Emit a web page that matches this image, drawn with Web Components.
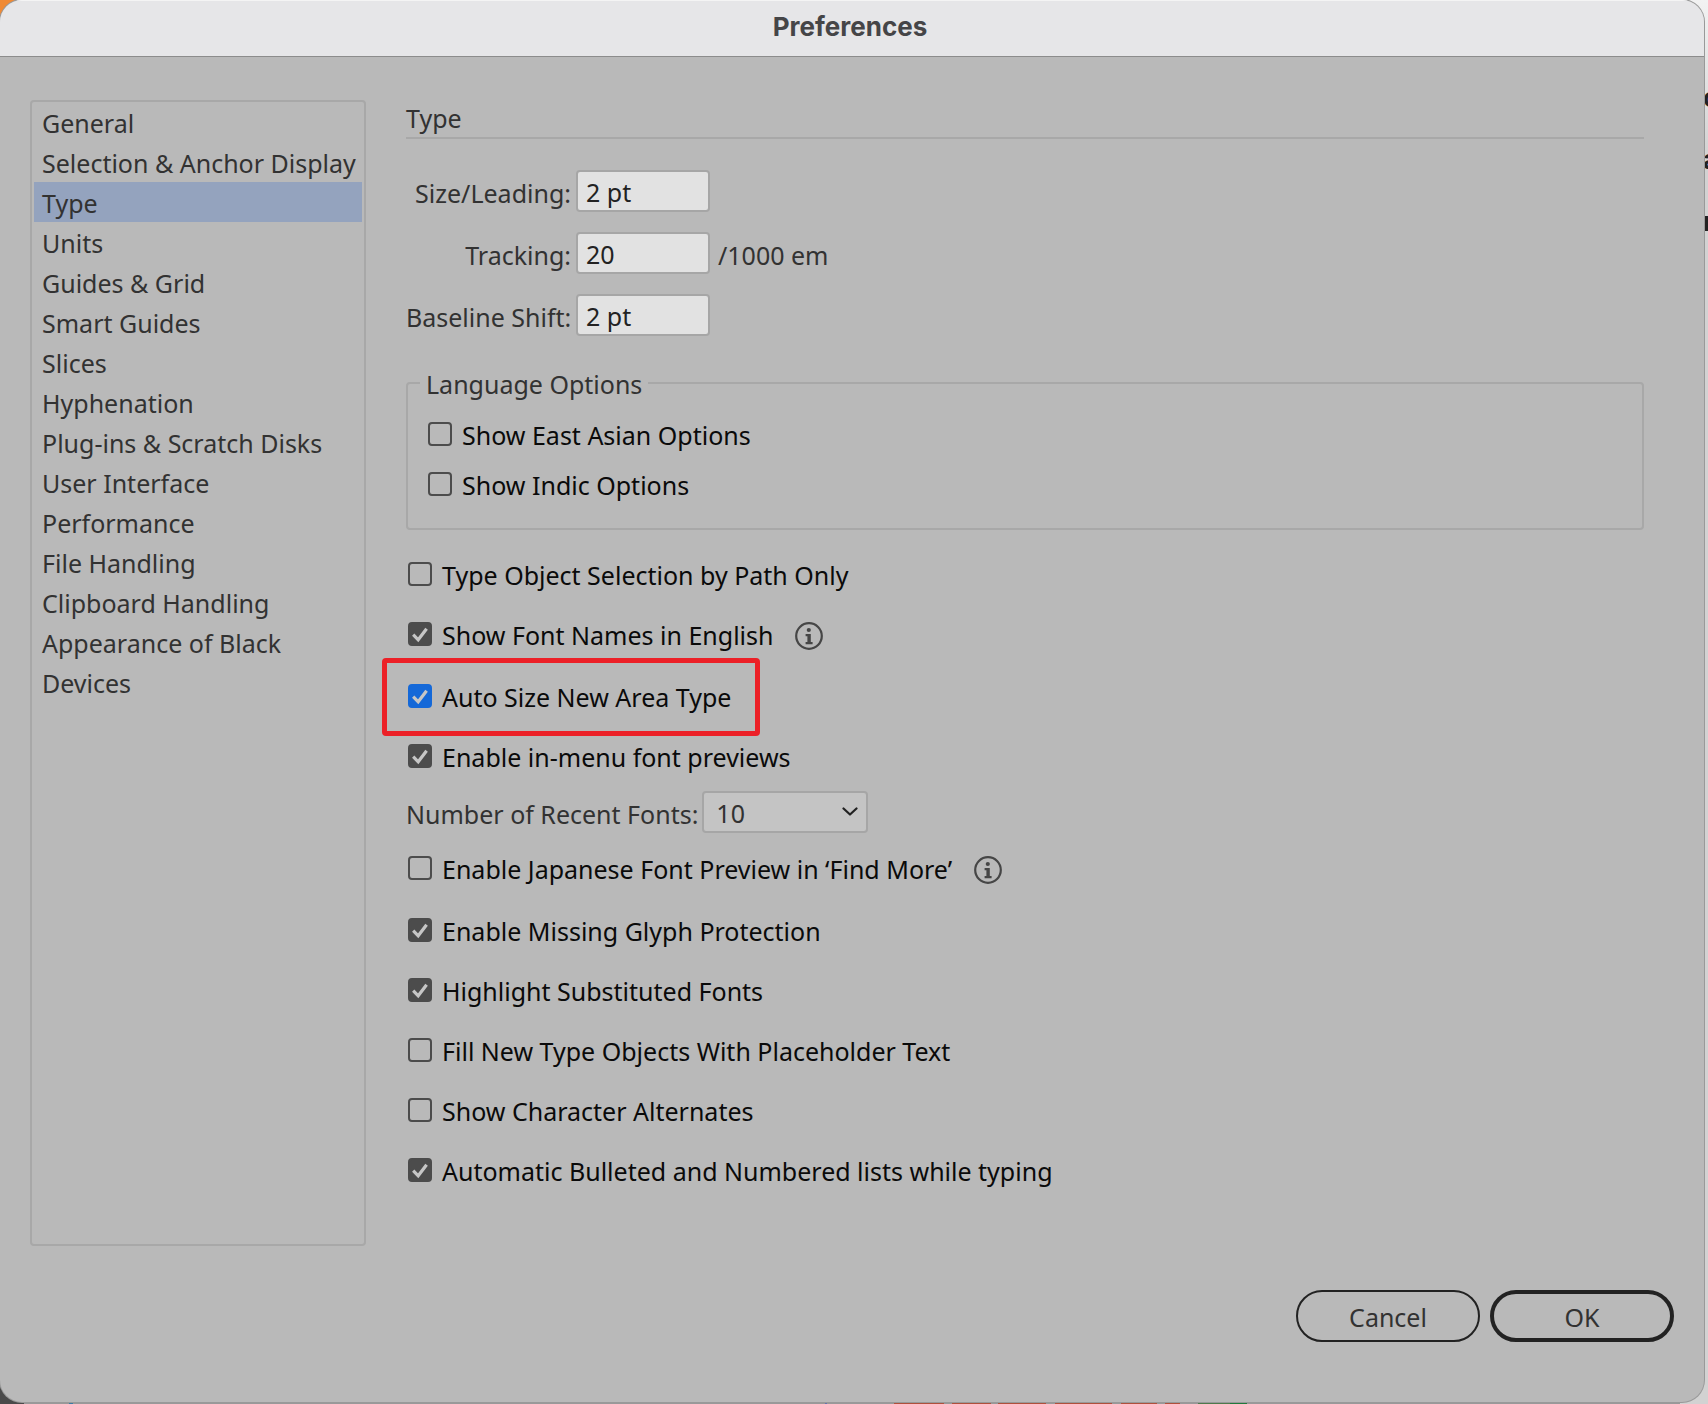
<!DOCTYPE html>
<html lang="en">
<head>
<meta charset="utf-8">
<title>Preferences</title>
<style>
html, body {
    margin: 0;
    min-height: 100%;
}
body {
    font-family: 'Noto Sans', 'Open Sans', sans-serif;
    font-size: 25px;
    line-height: 32px;
    color: #323232;
}
</style>
</head>
<body>
<desk-top>
    <span slot="behind">o</span>
    <span slot="behind">a</span>
    <span slot="behind">r</span>
    <pref-dialog heading="Preferences">
        <pref-nav slot="nav">
            <pref-nav-item>General</pref-nav-item>
            <pref-nav-item>Selection &amp; Anchor Display</pref-nav-item>
            <pref-nav-item selected>Type</pref-nav-item>
            <pref-nav-item>Units</pref-nav-item>
            <pref-nav-item>Guides &amp; Grid</pref-nav-item>
            <pref-nav-item>Smart Guides</pref-nav-item>
            <pref-nav-item>Slices</pref-nav-item>
            <pref-nav-item>Hyphenation</pref-nav-item>
            <pref-nav-item>Plug-ins &amp; Scratch Disks</pref-nav-item>
            <pref-nav-item>User Interface</pref-nav-item>
            <pref-nav-item>Performance</pref-nav-item>
            <pref-nav-item>File Handling</pref-nav-item>
            <pref-nav-item>Clipboard Handling</pref-nav-item>
            <pref-nav-item>Appearance of Black</pref-nav-item>
            <pref-nav-item>Devices</pref-nav-item>
        </pref-nav>
        <pref-panel heading="Type">
            <pref-field label="Size/Leading:" value="2 pt" slot="fields"></pref-field>
            <pref-field label="Tracking:" value="20" slot="fields">/1000 em</pref-field>
            <pref-field label="Baseline Shift:" value="2 pt" slot="fields"></pref-field>
            <pref-group legend="Language Options" slot="group">
                <pref-check>Show East Asian Options</pref-check>
                <pref-check>Show Indic Options</pref-check>
            </pref-group>
            <pref-check>Type Object Selection by Path Only</pref-check>
            <pref-check checked info>Show Font Names in English</pref-check>
            <pref-check checked marked>Auto Size New Area Type</pref-check>
            <pref-check checked>Enable in-menu font previews</pref-check>
            <pref-select label="Number of Recent Fonts:" value="10"></pref-select>
            <pref-check info>Enable Japanese Font Preview in ‘Find More’</pref-check>
            <pref-check checked>Enable Missing Glyph Protection</pref-check>
            <pref-check checked>Highlight Substituted Fonts</pref-check>
            <pref-check>Fill New Type Objects With Placeholder Text</pref-check>
            <pref-check>Show Character Alternates</pref-check>
            <pref-check checked>Automatic Bulleted and Numbered lists while typing</pref-check>
        </pref-panel>
        <pref-button slot="actions">Cancel</pref-button>
        <pref-button slot="actions" primary>OK</pref-button>
    </pref-dialog>
</desk-top>

<script>
class PrefElement extends HTMLElement {
    constructor() {
        super();
        this.attachShadow({mode: 'open'});
    }
    connectedCallback() {
        this.shadowRoot.innerHTML = `<style>*{box-sizing:border-box;}</style>` + this.render();
    }
}

// what can be seen around the window: page on the right, colour strips below
class DeskTop extends PrefElement {
    render() {
        return `
<style>
:host{
    display: grid;
    box-sizing: border-box;
    position: relative;
    overflow: hidden;
    min-height: 100vh;
    padding: 0 4px 2px 0;
    background:
        linear-gradient(#f08a35, #f08a35) 0 0 / 30px 30px no-repeat,
        linear-gradient(#4a4a4a, #4a4a4a) 0 100% / 24px 40px no-repeat,
        linear-gradient(90deg, transparent 69px, #3a7ca5 69px 73px, transparent 73px 825px, #6674b0 825px 827px, transparent 827px 894px,
            #b0503c 894px 944px, transparent 944px 952px, #b0503c 952px 991px, transparent 991px 998px, #b0503c 998px 1046px,
            transparent 1046px 1055px, #b0503c 1055px 1112px, transparent 1112px 1121px, #b0503c 1121px 1157px,
            transparent 1157px 1165px, #b0503c 1165px 1180px, transparent 1180px 1198px, #4f7a4c 1198px 1230px,
            #207a3c 1230px 1247px, transparent 1247px) 0 100% / 100% 2px no-repeat,
        linear-gradient(90deg, #999 0 1680px, transparent 1680px) 0 100% / 100% 2px no-repeat,
        linear-gradient(#f2f2f2, #d2d2d2 160px);
}
.behind{
    position: absolute;
    left: calc(100% - 5px);
    top: 67px;
    display: grid;
    font: bold 26px/62px Inter, sans-serif;
    color: #222;
}
::slotted(pref-dialog){
    position: relative;
}
</style>
<div class="behind" aria-hidden="true"><slot name="behind"></slot></div>
<slot></slot>`;
    }
}

class PrefDialog extends PrefElement {
    render() {
        return `
<style>
:host{
    display: flex;
    flex-direction: column;
    overflow: hidden;
    border-radius: 22px;
    background: #b9b9b9;
    box-shadow: 0 0 0 1px #999;
}
header{
    display: flex;
    justify-content: center;
    align-items: center;
    height: 57px;
    padding: 0 4px 4px 0;
    background: #e6e6e8;
    border-top: 1px solid #f4f4f4;
    border-bottom: 1px solid #8c8c8c;
}
h1{
    margin: 0;
    font: bold 26px/32px Inter, sans-serif;
    color: #454547;
}
.body{
    flex: 1;
    display: flex;
    align-items: stretch;
    gap: 40px;
    padding: 43px 60px 0 30px;
}
footer{
    display: flex;
    justify-content: flex-end;
    gap: 10px;
    padding: 44px 30px 60px;
}
</style>
<header><h1>${this.getAttribute('heading')}</h1></header>
<div class="body"><slot name="nav"></slot><slot></slot></div>
<footer><slot name="actions"></slot></footer>`;
    }
}

class PrefNav extends PrefElement {
    render() {
        return `
<style>
:host{
    flex: none;
    display: block;
    box-sizing: border-box;
    width: 336px;
    border: 2px solid #a8a8a8;
    border-radius: 4px;
}
nav{
    padding: 0 2px;
}
</style>
<nav aria-label="Categories"><slot></slot></nav>`;
    }
}

class PrefNavItem extends PrefElement {
    render() {
        return `
<style>
:host{
    display: block;
}
button{
    display: block;
    width: 100%;
    height: 40px;
    padding: 2px 0 0 8px;
    border: 0;
    background: none;
    font: inherit;
    color: inherit;
    text-align: left;
    white-space: nowrap;
}
:host([selected]) button{
    background: #94a3be;
}
</style>
<button type="button"><slot></slot></button>`;
    }
}

class PrefPanel extends PrefElement {
    render() {
        return `
<style>
:host{
    flex: 1;
    min-width: 0;
    display: block;
}
h2{
    margin: 0;
    padding: 2px 0 3px;
    border-bottom: 2px solid #a8a8a8;
    font: inherit;
}
.fields{
    display: grid;
    gap: 20px;
    padding: 31px 0 30px;
}
.options{
    display: grid;
    justify-items: start;
    padding: 14px 0 0 2px;
}
</style>
<h2>${this.getAttribute('heading')}</h2>
<div class="fields"><slot name="fields"></slot></div>
<slot name="group"></slot>
<div class="options"><slot></slot></div>`;
    }
}

class PrefField extends PrefElement {
    render() {
        return `
<style>
:host{
    display: flex;
    align-items: center;
}
label{
    width: 165px;
    margin-right: 5px;
    padding-top: 4px;
    text-align: right;
    white-space: nowrap;
}
input{
    width: 134px;
    height: 42px;
    margin-right: 8px;
    padding: 2px 0 0 8px;
    border: 2px solid #a6a6a6;
    border-radius: 4px;
    background: #e2e2e2;
    font: inherit;
    color: #222;
}
.unit{
    padding-top: 4px;
}
</style>
<label for="field">${this.getAttribute('label')}</label>
<input id="field" type="text" value="${this.getAttribute('value')}">
<span class="unit"><slot></slot></span>`;
    }
}

class PrefGroup extends PrefElement {
    render() {
        return `
<style>
:host{
    display: block;
    --row: 50px;
}
fieldset{
    display: grid;
    justify-items: start;
    margin: 0;
    padding: 9px 20px 19px;
    border: 2px solid #a8a8a8;
    border-radius: 4px;
}
legend{
    margin-left: -8px;
    padding: 2px 6px 0;
}
</style>
<fieldset>
    <legend>${this.getAttribute('legend')}</legend>
    <slot></slot>
</fieldset>`;
    }
}

class PrefCheck extends PrefElement {
    render() {
        const info = `
<button type="button" aria-label="More information">
    <svg width="28" height="28" viewBox="0 0 28 28">
        <circle cx="14" cy="14" r="12.8" fill="none" stroke="#464646" stroke-width="2.2"/>
        <circle cx="13.8" cy="8" r="2.1" fill="#464646"/>
        <path d="M10.600 12h5.200v8h1.800v2.200h-7v-2.200h1.800v-5.800h-1.800z" fill="#464646"/>
    </svg>
</button>`;
        return `
<style>
:host{
    display: flex;
    align-items: center;
    height: var(--row, 60px);
    color: #0a0a0a;
}
:host([info]){
    margin-bottom: 2px;
}
label{
    position: relative;
    display: flex;
    align-items: center;
    gap: 10px;
    white-space: nowrap;
}
.box{
    display: grid;
}
.box > *{
    grid-area: 1 / 1;
}
input{
    appearance: none;
    width: 24px;
    height: 24px;
    margin: 0;
    border: 2px solid #4c4c4c;
    border-radius: 4px;
}
input:checked{
    background: #4c4c4c;
}
:host([marked]) input{
    border-color: #1468d8;
    background: #1468d8;
}
.box svg{
    pointer-events: none;
    visibility: hidden;
}
input:checked + svg{
    visibility: visible;
}
.text{
    padding-top: 2px;
}
:host([marked]) label::after{
    content: '';
    position: absolute;
    inset: -21px -29px -23px -26px;
    border: 5px solid #ec2027;
    border-radius: 4px;
    pointer-events: none;
}
button{
    display: flex;
    margin: 4px 0 0 22px;
    padding: 0;
    border: 0;
    background: none;
}
</style>
<label>
    <span class="box">
        <input type="checkbox" ${this.hasAttribute('checked') ? 'checked' : ''}>
        <svg width="24" height="24" viewBox="0 0 24 24"><path d="M5.2 12.6l5 5.200L18.600 6.800" fill="none" stroke="#c6c6c6" stroke-width="3.200"/></svg>
    </span>
    <span class="text"><slot></slot></span>
</label>
${this.hasAttribute('info') ? info : ''}`;
    }
}

class PrefSelect extends PrefElement {
    render() {
        return `
<style>
:host{
    display: flex;
    align-items: center;
    gap: 4px;
    height: 52px;
    margin-left: -2px;
}
label{
    padding-top: 4px;
    white-space: nowrap;
}
.menu{
    display: grid;
    align-items: center;
}
.menu > *{
    grid-area: 1 / 1;
}
select{
    appearance: none;
    width: 166px;
    height: 42px;
    padding: 2px 40px 0 12px;
    border: 2px solid #a6a6a6;
    border-radius: 4px;
    background: #c4c4c4;
    font: inherit;
    color: inherit;
}
svg{
    justify-self: end;
    margin-right: 10px;
    pointer-events: none;
}
</style>
<label for="menu">${this.getAttribute('label')}</label>
<span class="menu">
    <select id="menu"><option>${this.getAttribute('value')}</option></select>
    <svg width="16" height="10" viewBox="0 0 16 10"><path d="M1.5 1.5L8 7.5l6.5-6" fill="none" stroke="#222" stroke-width="2.2" stroke-linecap="round" stroke-linejoin="round"/></svg>
</span>`;
    }
}

class PrefButton extends PrefElement {
    render() {
        return `
<style>
:host{
    display: block;
}
button{
    width: 184px;
    height: 52px;
    padding: 2px 0 0;
    border: 2px solid #222;
    border-radius: 26px;
    background: none;
    font: inherit;
    color: inherit;
}
:host([primary]) button{
    border-width: 4px;
}
</style>
<button type="button"><slot></slot></button>`;
    }
}

customElements.define('desk-top', DeskTop);
customElements.define('pref-dialog', PrefDialog);
customElements.define('pref-nav', PrefNav);
customElements.define('pref-nav-item', PrefNavItem);
customElements.define('pref-panel', PrefPanel);
customElements.define('pref-field', PrefField);
customElements.define('pref-group', PrefGroup);
customElements.define('pref-check', PrefCheck);
customElements.define('pref-select', PrefSelect);
customElements.define('pref-button', PrefButton);
</script>
</body>
</html>
